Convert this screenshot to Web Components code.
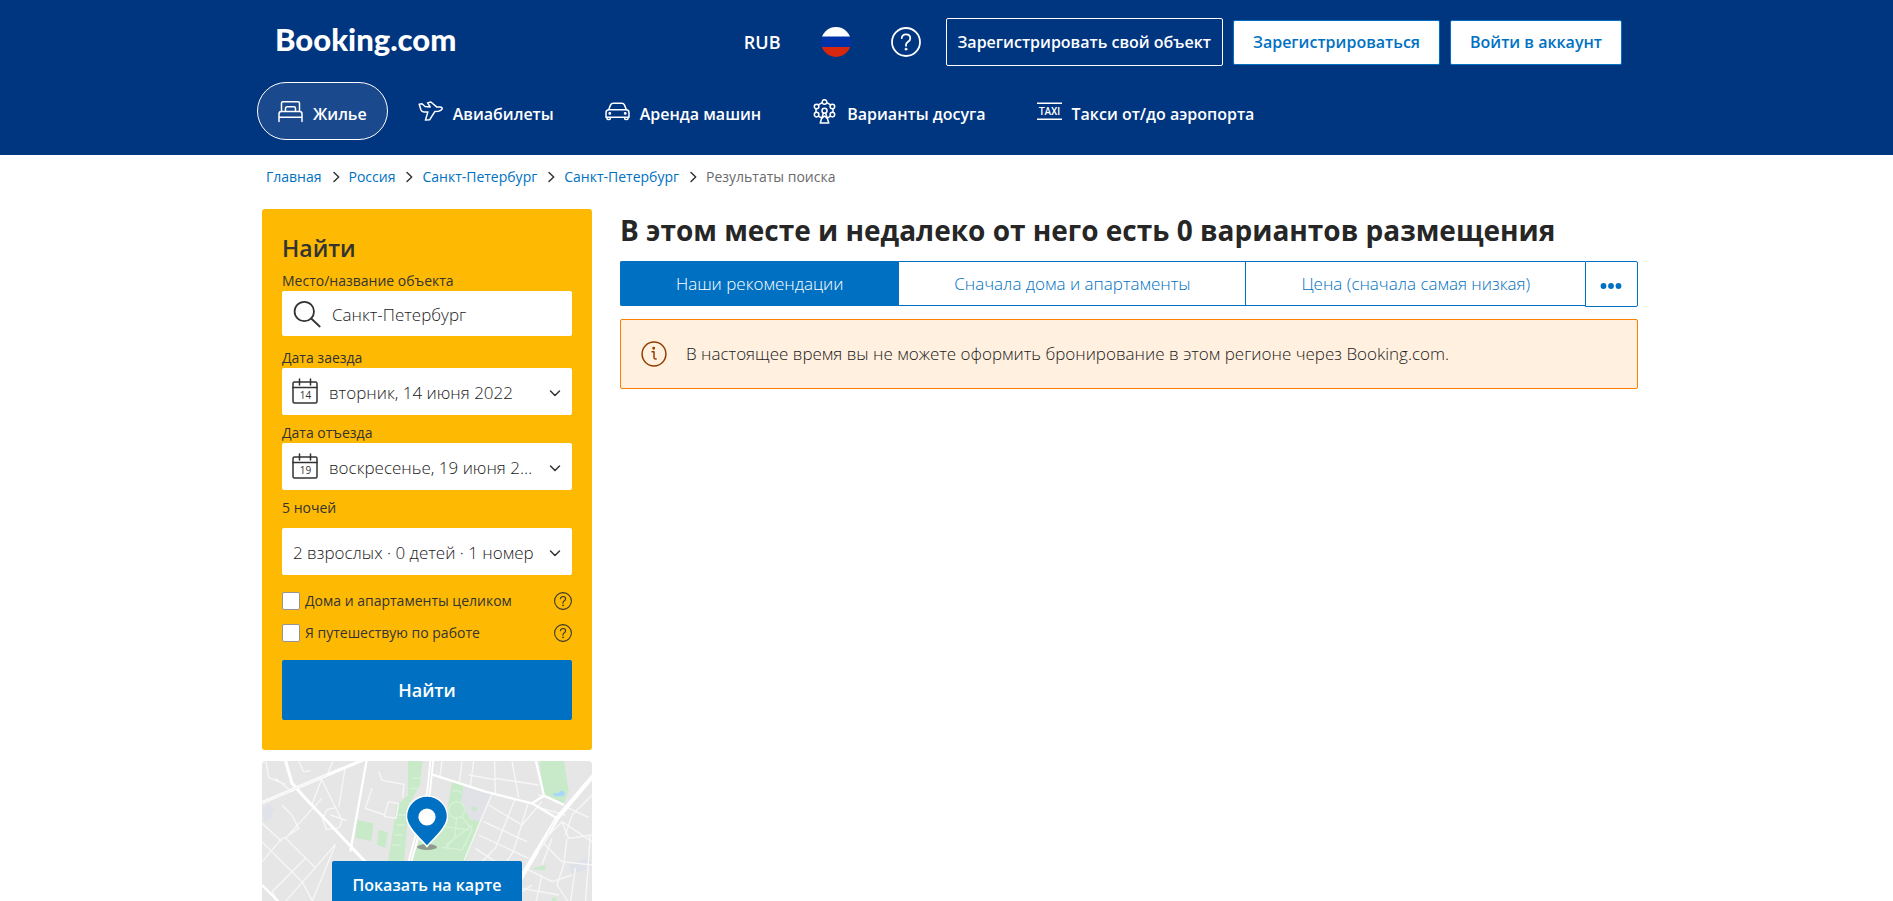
<!DOCTYPE html>
<html lang="ru">
<head>
<meta charset="utf-8">
<meta name="viewport" content="width=device-width, initial-scale=1">
<title>Booking.com: Санкт-Петербург</title>
<style>
  html { scrollbar-width: none; }
  body {
    margin: 0;
    background: #fff;
    color: #1a1a1a;
    font-family: "Open Sans", "Noto Sans", sans-serif;
    font-size: 17px;
    --blue: #0071c2;
    --navy: #003580;
    --yellow: #feba02;
    --text: 17px;
    --strong: 16px;
    --small: 14px;
    --light: 300;
    --medium: 600;
    --wrap: 1383px;
  }
</style>
</head>
<body>
<bk-page></bk-page>

<script>
const define = (name, html) => {
  const template = document.createElement('template');
  template.innerHTML = html;
  customElements.define(name, class extends HTMLElement {
    constructor() {
      super();
      this.attachShadow({ mode: 'open' }).append(template.content.cloneNode(true));
    }
    connectedCallback() {
      // Parts marked data-fill show the value of the host attribute they name.
      this.shadowRoot.querySelectorAll('[data-fill]').forEach(el => {
        const value = this.getAttribute(el.dataset.fill);
        if (value !== null) el.textContent = value;
      });
    }
  });
};

const icons = {
  bed: ['0 0 25 25', '<path d="M3.500 12.500V4.200c0-.9.6-1.500 1.500-1.500h15c.9 0 1.500.6 1.500 1.500v8.300M1 22.500v-7.600c0-1.300 1-2.300 2.300-2.300h18.400c1.300 0 2.300 1 2.300 2.300v7.600M1 18.300h23M7.500 12.500V9.300c0-.9.7-1.600 1.600-1.600h6.800c.9 0 1.600.7 1.600 1.600v3.200"/>'],
  plane: ['0 0 25 25', '<path d="M1.200 5.200 4 4.800l3 2.700 5.200.4-2.600-4 3.300-.9 5.700 4.900 3.500.1c1.600.1 2.500 1.100 1.900 2.200-.6 1.200-2 1.800-3.500 2l-3.700.4-5.200 8.200-4.200.3 2.500-8.200H6c-1.500 0-2.500-.6-3-1.900z"/>'],
  car: ['0 0 25 25', '<path d="M3.600 10.800 5.600 5.900c.5-1.200 1.300-1.700 2.600-1.700h8.600c1.300 0 2.100.5 2.600 1.700l2 4.900M4 10.800h17c1.800 0 3 1.100 3 2.900v4.500H1v-4.500c0-1.800 1.200-2.900 3-2.900zM2 18.400v1.300c0 1.200 3.300 1.200 3.300 0v-1.300M19.700 18.400v1.300c0 1.200 3.300 1.200 3.300 0v-1.300"/><circle cx="4.800" cy="14.400" r=".7" fill="currentColor"/><circle cx="20.200" cy="14.400" r=".7" fill="currentColor"/>'],
  wheel: ['0 0 25 25', '<circle cx="12.500" cy="3" r="2.300"/><circle cx="4.600" cy="7.500" r="2.300"/><circle cx="20.400" cy="7.500" r="2.300"/><circle cx="4.600" cy="15.600" r="2.300"/><circle cx="20.400" cy="15.600" r="2.300"/><circle cx="12.500" cy="11.700" r="2.500"/><path d="m6.700 5.600 3.500-2M14.800 3.600l3.500 2M4 9.800v3.500M21 9.800v3.500M11.400 14 8.200 24h8.600l-3.200-10M6.800 17.400l2.600 1.400M18.200 17.400l-2.600 1.400M10 19.300l2.500-2.300 2.500 2.300"/>'],
  taxi: ['0 0 25 25', '<path stroke-width="1.500" d="M0 4.300h25M0 20.300h25"/><text x="12.500" y="16" text-anchor="middle" font-family="Roboto, sans-serif" font-weight="500" font-size="10" fill="currentColor" stroke="none">TAXI</text>'],
  help: ['0 0 30 30', '<circle cx="15" cy="15" r="14"/><path d="M10.700 11.200c.3-2.400 1.900-3.800 4.300-3.800 2.500 0 4.300 1.500 4.300 3.800 0 1.700-.9 2.600-2.300 3.500-1.300.9-2 1.600-2 3.100v1"/><circle cx="15" cy="22.200" r="1.100" fill="currentColor" stroke-width=".6"/>'],
  info: ['0 0 26 26', '<circle cx="13" cy="13" r="11.900"/><path d="M11 10.800h2v5.600c0 1.200.7 1.700 2.200 1.500"/><circle cx="12.700" cy="7.300" r=".7" fill="currentColor"/>'],
  search: ['0 0 28 28', '<circle cx="11.300" cy="11.500" r="9.700"/><path d="m18.200 18.500 8.500 8"/>'],
  down: ['0 0 12 12', '<path d="m1.500 4 4.500 4.500L10.500 4"/>'],
  right: ['0 0 9 12', '<path d="m2 1.500 4.700 4.500L2 10.500"/>'],
  flag: ['0 0 30 30', '<clipPath id="c"><circle cx="15" cy="15" r="15"/></clipPath><g clip-path="url(#c)" stroke="none"><path fill="#fff" d="M0 0h30v10H0z"/><path fill="#0033a8" d="M0 9.500h30V20H0z"/><path fill="#d8270f" d="M0 20h30v10H0z"/></g>'],
};

// <bk-icon name="…"> draws one line icon; its size comes from custom properties, its line from "stroke".
customElements.define('bk-icon', class extends HTMLElement {
  connectedCallback() {
    if (this.shadowRoot) return;
    const [box, shape] = icons[this.getAttribute('name')];
    this.attachShadow({ mode: 'open' }).innerHTML = `
      <style>
        :host { display: block; flex: none; width: var(--w, 25px); height: var(--h, var(--w, 25px)); }
        svg { display: block; width: 100%; height: 100%; }
      </style>
      <svg viewBox="${box}" fill="none" stroke="currentColor" stroke-width="${this.getAttribute('stroke') || 1.5}"
        stroke-linejoin="round" stroke-linecap="round" aria-hidden="true">${shape}</svg>`;
  }
});

define('bk-nav-link', `
  <style>
    :host { display: block; }
    a {
      display: flex; align-items: center; gap: 10px; box-sizing: border-box; height: 58px;
      padding: 0 20px; border: 1px solid transparent; border-radius: 30px;
      color: #fff; text-decoration: none; font-size: var(--strong); font-weight: var(--medium); line-height: 22px; white-space: nowrap;
    }
    :host([current]) a { border-color: #fff; background: rgba(255, 255, 255, .1); }
    span { padding-top: 5px; }
  </style>
  <a href="#"><slot name="icon"></slot><span><slot></slot></span></a>`);

define('bk-header', `
  <style>
    :host { display: block; background: var(--navy); color: #fff; }
    .wrap { box-sizing: border-box; max-width: var(--wrap); margin: 0 auto; padding: 18px 16px 15px 2px; }
    .top { display: flex; align-items: center; gap: 10px; min-height: 48px; }
    .logo {
      margin: 0 auto 0 18px; padding-bottom: 6px; color: #fff; text-decoration: none;
      font: 900 31px/42px Lato, sans-serif;
    }
    button { font: inherit; color: inherit; background: none; border: 0; padding: 0; cursor: pointer; }
    .tools { display: flex; align-items: center; gap: 40px; margin-right: 15px; font-size: 18px; font-weight: 600; }
    .tools bk-icon { --w: 30px; }
    .cta {
      box-sizing: border-box; border: 1px solid #fff; border-radius: 2px; color: #fff; font-size: var(--strong);
      text-decoration: none; font-weight: var(--medium); line-height: 46px; padding: 0 11px; white-space: nowrap;
    }
    .solid { background: #fff; color: var(--blue); border-color: var(--blue); line-height: 43px; padding: 0 19px; }
    nav { display: flex; gap: 9px; margin-top: 16px; }
  </style>
  <div class="wrap">
    <div class="top">
      <a class="logo" href="#">Booking.com</a>
      <div class="tools">
        <button type="button">RUB</button>
        <button type="button" aria-label="Язык"><bk-icon name="flag"></bk-icon></button>
        <button type="button" aria-label="Служба поддержки"><bk-icon name="help" stroke="1.800"></bk-icon></button>
      </div>
      <a class="cta" href="#">Зарегистрировать свой объект</a>
      <a class="cta solid" href="#">Зарегистрироваться</a>
      <a class="cta solid" href="#">Войти в аккаунт</a>
    </div>
    <nav>
      <bk-nav-link current><bk-icon slot="icon" name="bed"></bk-icon>Жилье</bk-nav-link>
      <bk-nav-link><bk-icon slot="icon" name="plane"></bk-icon>Авиабилеты</bk-nav-link>
      <bk-nav-link><bk-icon slot="icon" name="car"></bk-icon>Аренда машин</bk-nav-link>
      <bk-nav-link><bk-icon slot="icon" name="wheel"></bk-icon>Варианты досуга</bk-nav-link>
      <bk-nav-link><bk-icon slot="icon" name="taxi"></bk-icon>Такси от/до аэропорта</bk-nav-link>
    </nav>
  </div>`);

define('bk-breadcrumbs', `
  <style>
    :host { display: block; padding: 12px 4px 22px; font-size: var(--small); line-height: 20px; }
    ol { display: flex; flex-wrap: wrap; gap: 8px; margin: 0; padding: 0; list-style: none; }
    li { display: flex; align-items: center; gap: 10px; color: #6b6b6b; }
    a { color: var(--blue); text-decoration: none; }
    bk-icon { --w: 9px; --h: 12px; color: #333; }
  </style>
  <ol>
    <li><a href="#">Главная</a><bk-icon name="right"></bk-icon></li>
    <li><a href="#">Россия</a><bk-icon name="right"></bk-icon></li>
    <li><a href="#">Санкт-Петербург</a><bk-icon name="right"></bk-icon></li>
    <li><a href="#">Санкт-Петербург</a><bk-icon name="right"></bk-icon></li>
    <li>Результаты поиска</li>
  </ol>`);

define('bk-calendar', `
  <style>
    :host { display: block; width: 26px; height: 27px; }
    svg { display: block; }
  </style>
  <svg width="26" height="27" viewBox="0 0 26 27" fill="none" stroke="#333" stroke-width="1.500" stroke-linecap="round" aria-hidden="true">
    <rect x="1" y="4" width="24" height="21" rx="1.500"/><path d="M1 9.500h24M7.500 1v6M18.500 1v6"/>
    <text data-fill="day" x="13.500" y="21" text-anchor="middle" font-size="10" fill="#333" stroke="none"></text>
  </svg>`);

define('bk-search', `
  <style>
    :host { display: block; background: var(--yellow); border-radius: 3px; padding: 23px 20px 30px; color: #333; font-size: var(--small); }
    form { display: flex; flex-direction: column; }
    h2 { margin: 0 0 6px; font-size: 23px; font-weight: var(--medium); line-height: 32px; }
    label, .nights { line-height: 21px; }
    .later { margin-top: 7px; }
    .nights { margin: 7px 0 10px; }
    .field { display: grid; align-items: center; height: 47px; background: #fff; border-radius: 2px; }
    .place { height: 45px; margin-bottom: 11px; }
    .field > * { grid-area: 1 / 1; }
    .field bk-icon, .field bk-calendar { pointer-events: none; z-index: 1; margin-left: 11px; }
    .field bk-calendar { margin-left: 10px; }
    .place bk-icon { --w: 28px; }
    .field .down { --w: 12px; justify-self: end; margin: 2px 11px 0 0; color: #333; }
    input.text, select {
      appearance: none; box-sizing: border-box; width: 100%; height: 100%; margin: 0; border: 0; background: none;
      font: var(--light) var(--text)/24px "Open Sans", sans-serif; color: #1a1a1a; border-radius: 2px;
      padding: 2px 36px 0 47px; text-overflow: ellipsis; white-space: nowrap; overflow: hidden;
    }
    input.text { padding-left: 50px; }
    select.wide { padding-left: 11px; }
    .checks { display: flex; flex-direction: column; gap: 10px; margin: 15px 0 16px; }
    .check { display: flex; align-items: center; }
    .check label { display: flex; align-items: center; gap: 5px; line-height: 22px; margin-right: auto; }
    .check input { appearance: none; box-sizing: border-box; width: 18px; height: 18px; margin: 0; border: 1px solid #949494; border-radius: 2px; background: #fff; }
    .check bk-icon { --w: 18px; }
    button { height: 60px; border: 0; border-radius: 2px; background: var(--blue); color: #fff; font: 600 18px/24px "Open Sans", sans-serif; cursor: pointer; }
  </style>
  <form>
    <h2>Найти</h2>
    <label for="place">Место/название объекта</label>
    <div class="field place"><bk-icon name="search" stroke="1.800"></bk-icon><input class="text" id="place" type="text" value="Санкт-Петербург"></div>
    <label for="in">Дата заезда</label>
    <div class="field"><bk-calendar day="14"></bk-calendar><select id="in"><option>вторник, 14 июня 2022</option></select><bk-icon class="down" name="down"></bk-icon></div>
    <label class="later" for="out">Дата отъезда</label>
    <div class="field"><bk-calendar day="19"></bk-calendar><select id="out"><option>воскресенье, 19 июня 2022</option></select><bk-icon class="down" name="down"></bk-icon></div>
    <div class="nights">5 ночей</div>
    <div class="field"><select class="wide" aria-label="Гости"><option>2 взрослых · 0 детей · 1 номер</option></select><bk-icon class="down" name="down"></bk-icon></div>
    <div class="checks">
      <div class="check"><label><input type="checkbox">Дома и апартаменты целиком</label><bk-icon name="help" stroke="1.800"></bk-icon></div>
      <div class="check"><label><input type="checkbox">Я путешествую по работе</label><bk-icon name="help" stroke="1.800"></bk-icon></div>
    </div>
    <button type="button">Найти</button>
  </form>`);

define('bk-map', `
  <style>
    :host { display: grid; border-radius: 4px; overflow: hidden; background: #e6e6e6; }
    :host > * { grid-area: 1 / 1; }
    .map { grid-area: 1 / 1; width: 100%; height: 100%; min-height: 0; contain: size; display: block; }
    .over { grid-area: 1 / 1; display: flex; flex-direction: column; align-items: center; gap: 10px; padding: 34px 20px 24px; z-index: 1; }
    .pin { display: block; }
    button { height: 48px; padding: 0 20px; border: 0; border-radius: 2px; background: var(--blue); color: #fff; font: var(--medium) var(--strong)/24px "Open Sans", sans-serif; cursor: pointer; }
  </style>
  <svg class="map" viewBox="0 18 990 525" preserveAspectRatio="xMidYMin slice" fill="none" stroke="#fff" stroke-linejoin="round" aria-hidden="true">
    <g stroke="none" fill="#c8eac8">
      <path d="M438 18h44l-8 72-34 60-12 150-20 240h-50l20-220 27-170 33-30z"/>
      <path d="m285 195 50 10-7 53-48-10zM350 225l28 7-8 46-25-8z"/>
      <path d="m570 80 35 12-7 50 57 60-45 118H450l20-60 80-60z"/>
      <path d="M832 18h74l14 92-18 42-57-30zM805 342l48-12-6 16zM870 430l12-4 2 16h-14z"/>
      <path fill="#e0e2e7" d="m606 92 84 24-36 84-30-8-26-50z"/>
      <path d="m626 158 16-4 4 12-12 4z"/>
      <path fill="#a9d7fb" d="M872 116c8-4 14 2 20-6 8-6 18 0 16 8-4 10-16 4-22 6s-12-2-14-8z"/>
      <path fill="#dfe2e8" d="m0 160 20-14 16 14-10 32-20 8zM920 330l60-25 10 30-60 25z"/>
    </g>
    <path stroke="#d7f1d7" stroke-width="4" d="M448 70h30M442 100h28M408 180h24M404 210h24M398 240h24M392 270h24M570 110c10-6 22-4 28 4M560 165a24 24 0 1 0 48 0 24 24 0 1 0-48 0M584 190l-6 60-30 30M600 185l30 40-30 60-60-8M632 210l-80 60M550 215l70 10"/>
    <g stroke="#f7f7f7" stroke-width="4">
      <path d="M0 205 60 260M12 18l8 50 50 20M110 18l15 32 20-2M40 70l50 40 20-20M175 66l45 90 20 40-8 22-38 6-12-30 12-30 28-6M195 60l18-42M250 36l-20 120M150 150l30-80M205 180l50 16M0 320l60-70 10-2 90 90 60-70M0 260l120 120 60 110M70 250 180 130M160 338 70 440M130 310 30 410l60 100M220 270l-70 170M60 150l30 30 20 40-30 20M350 50l10 26 66 12-4 40M330 100l-20 60 60 20M380 140l30 6-8 44-36-6z"/>
      <path d="M540 18l-6 46M600 18l-8 66M635 18l-10 76M698 18l2 98M700 70l130 20M620 60l80 14M750 18l20 110M690 116l-38 90-45 110M680 150l100 60 60-70M665 200l130 60M760 130l-60 150-40 40M650 240l150 70M640 280l60 40M800 140l-46 150-20 30M840 160l70 20M830 120l60 20M910 155l70 32M990 120l-60 60-20 60M990 260l-90-60-60 60M900 200l20 50 70-10M915 250l-10 80-20 60 40 60M840 260l60 60 90 10M870 250l-30 80M790 340l80 40 60-20M840 360l-20 90M780 400l110 20M940 340l-16 110M985 240l-15 210M720 450l90-60"/>
    </g>
    <path stroke-width="9" d="M0 143 195 60 320 8M68 8l22 77 40 45 170 180 190 190"/>
    <path stroke="#e6e6e6" stroke-width="2" d="m0 143 195-83"/>
    <path stroke-width="7" d="m315 10-50 280M0 390l80 80M500 55l170 55 140 35 75 45M820 10l26 112-36 23M846 122l60 28"/>
    <path stroke-width="14" d="m510 10-10 100-56 210-40 220"/>
    <path stroke="#e6e6e6" stroke-width="3" d="m510 10-10 100-56 210-40 220"/>
    <path stroke-width="13" d="M1000 55 885 190 800 330l-60 100-80 130"/>
    <path stroke="#e6e6e6" stroke-width="2" d="M880 196 830 290"/>
  </svg>
  <div class="over">
    <svg class="pin" width="44" height="56" viewBox="0 0 44 56" aria-hidden="true">
      <ellipse cx="22" cy="52" rx="10" ry="3" fill="#8f9a8f"/>
      <path fill="#0071c2" stroke="#fff" stroke-width="1.500" d="M22 51.500C17 45 1.500 33 1.500 21.500a20.500 20.500 0 0 1 41 0C42.500 33 27 45 22 51.500z"/>
      <circle cx="22" cy="22" r="8.600" fill="#fff"/>
    </svg>
    <button type="button">Показать на карте</button>
  </div>`);

define('bk-sort', `
  <style>
    :host { display: flex; align-items: flex-start; margin-bottom: 12px; }
    button {
      flex: 1 1 auto; height: 45px; margin: 0; padding: 0 20px; border: 1px solid var(--blue); border-right-width: 0; background: #fff;
      color: var(--blue); font: var(--light) var(--text)/24px "Open Sans", sans-serif; cursor: pointer;
    }
    .on { background: var(--blue); color: #fff; border-radius: 2px 0 0 2px; }
    .more { flex: none; width: 53px; height: 46px; padding: 4px 0 0; border-right-width: 1px; border-radius: 0 2px 2px 0; }
    svg { display: block; margin: 0 auto; }
  </style>
  <button type="button" class="on">Наши рекомендации</button>
  <button type="button">Сначала дома и апартаменты</button>
  <button type="button">Цена (сначала самая низкая)</button>
  <button type="button" class="more" aria-label="Ещё"><svg width="22" height="6" viewBox="0 0 22 6" fill="currentColor"><circle cx="3.500" cy="3" r="2.900"/><circle cx="11" cy="3" r="2.900"/><circle cx="18.500" cy="3" r="2.900"/></svg></button>`);

define('bk-alert', `
  <style>
    :host {
      display: flex; align-items: center; gap: 19px; box-sizing: border-box; min-height: 70px; padding: 10px 20px;
      border: 1px solid #ff8000; border-radius: 2px; background: #fff0e0; line-height: 24px; font-weight: var(--light);
    }
    bk-icon { --w: 26px; color: #923e01; }
  </style>
  <bk-icon name="info"></bk-icon><div><slot></slot></div>`);

define('bk-page', `
  <style>
    :host { display: block; }
    .wrap { box-sizing: border-box; max-width: var(--wrap); margin: 0 auto; padding-left: 7px; }
    .cols { display: flex; align-items: flex-start; gap: 28px; }
    aside { flex: none; width: 330px; display: flex; flex-direction: column; gap: 11px; }
    main { flex: 1; min-width: 0; }
    h1 { margin: 0 0 10px; font-size: 28px; font-weight: 700; line-height: 42px; color: #262626; }
  </style>
  <bk-header></bk-header>
  <div class="wrap">
    <bk-breadcrumbs></bk-breadcrumbs>
    <div class="cols">
      <aside><bk-search></bk-search><bk-map></bk-map></aside>
      <main>
        <h1>В этом месте и недалеко от него есть 0 вариантов размещения</h1>
        <bk-sort></bk-sort>
        <bk-alert>В настоящее время вы не можете оформить бронирование в этом регионе через Booking.com.</bk-alert>
      </main>
    </div>
  </div>`);
</script>
</body>
</html>
